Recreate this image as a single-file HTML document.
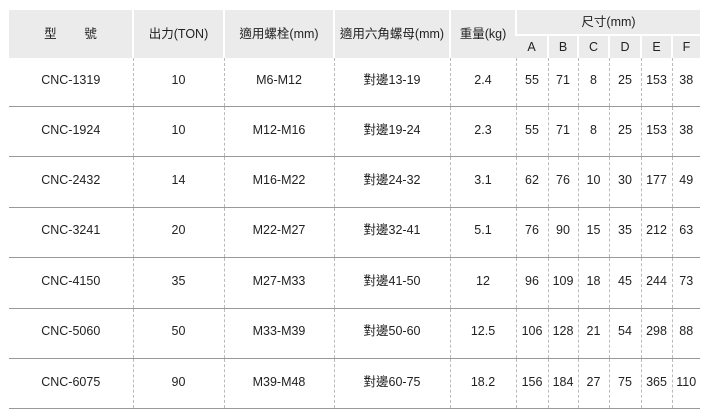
<!DOCTYPE html>
<html><head><meta charset="utf-8"><style>
body{margin:0;width:712px;height:418px;background:#fff;overflow:hidden;font-family:"Liberation Sans","Noto Sans CJK TC",sans-serif;color:#222;}
table{position:absolute;left:9px;top:10px;border-collapse:collapse;table-layout:fixed;font-size:12.5px;line-height:14px;}
th{background:#ebebeb;font-weight:normal;border-left:2px solid #fff;padding:0;text-align:center;}
th:first-child{border-left:none}
td{text-align:center;padding:0 0 4px 0;height:45.4px;border-left:1px dashed #bbb;border-bottom:1px solid #999;}
td:first-child{border-left:none}
tr.f td{height:44px}
</style></head><body>
<table>
<colgroup><col style="width:124px"><col style="width:91px"><col style="width:110px"><col style="width:116px"><col style="width:66px"><col style="width:32px"><col style="width:30px"><col style="width:31px"><col style="width:32px"><col style="width:31px"><col style="width:28px"></colgroup>
<tr style="height:25px"><th rowspan="2">型&nbsp;&nbsp;&nbsp;&nbsp;&nbsp;&nbsp;&nbsp;&nbsp;號</th><th rowspan="2">出力(TON)</th><th rowspan="2">適用螺栓(mm)</th><th rowspan="2">適用六角螺母(mm)</th><th rowspan="2">重量(kg)</th><th colspan="6" style="border-bottom:2px solid #fff">尺寸(mm)</th></tr>
<tr style="height:23px"><th>A</th><th>B</th><th>C</th><th>D</th><th>E</th><th>F</th></tr>
<tr class="f"><td>CNC-1319</td><td>10</td><td>M6-M12</td><td>對邊13-19</td><td>2.4</td><td>55</td><td>71</td><td>8</td><td>25</td><td>153</td><td>38</td></tr>
<tr><td>CNC-1924</td><td>10</td><td>M12-M16</td><td>對邊19-24</td><td>2.3</td><td>55</td><td>71</td><td>8</td><td>25</td><td>153</td><td>38</td></tr>
<tr><td>CNC-2432</td><td>14</td><td>M16-M22</td><td>對邊24-32</td><td>3.1</td><td>62</td><td>76</td><td>10</td><td>30</td><td>177</td><td>49</td></tr>
<tr><td>CNC-3241</td><td>20</td><td>M22-M27</td><td>對邊32-41</td><td>5.1</td><td>76</td><td>90</td><td>15</td><td>35</td><td>212</td><td>63</td></tr>
<tr><td>CNC-4150</td><td>35</td><td>M27-M33</td><td>對邊41-50</td><td>12</td><td>96</td><td>109</td><td>18</td><td>45</td><td>244</td><td>73</td></tr>
<tr><td>CNC-5060</td><td>50</td><td>M33-M39</td><td>對邊50-60</td><td>12.5</td><td>106</td><td>128</td><td>21</td><td>54</td><td>298</td><td>88</td></tr>
<tr><td>CNC-6075</td><td>90</td><td>M39-M48</td><td>對邊60-75</td><td>18.2</td><td>156</td><td>184</td><td>27</td><td>75</td><td>365</td><td>110</td></tr>
</table>
</body></html>
